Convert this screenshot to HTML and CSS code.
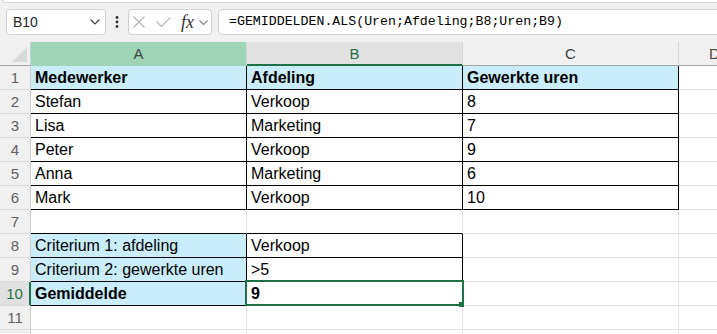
FILE: index.html
```html
<!DOCTYPE html>
<html lang="nl">
	<head>
		<title>Werkblad</title>
		<meta charset="UTF-8" />
		<link rel="stylesheet" href="styles.css">
	</head>
	<body>
		<div class="ribbon-edge"></div>
		<!-- Formula bar -->
		<div class="formula-bar">
			<div class="name-box">
				<span>B10</span>
				<svg class="chev" width="10" height="6" viewBox="0 0 10 6"><path d="M0.5 0.5L5 5L9.5 0.5"/></svg>
			</div>
			<div class="more">
				<svg width="4" height="12" viewBox="0 0 4 12"><circle cx="2" cy="1.5" r="1.4"/><circle cx="2" cy="6" r="1.4"/><circle cx="2" cy="10.5" r="1.4"/></svg>
			</div>
			<div class="fx-box">
				<svg class="cancel" width="12" height="12" viewBox="0 0 12 12"><path d="M0.5 0.5L11.5 11.5M11.5 0.5L0.5 11.5"/></svg>
				<svg class="enter" width="15" height="10" viewBox="0 0 15 10"><path d="M0.5 4.5L5.5 9.5L14.5 0.5"/></svg>
				<span class="fx">fx</span>
				<svg class="chev small" width="9" height="5" viewBox="0 0 9 5"><path d="M0.5 0.5L4.5 4.5L8.5 0.5"/></svg>
			</div>
			<div class="formula">=GEMIDDELDEN.ALS(Uren;Afdeling;B8;Uren;B9)</div>
		</div>

		<!-- Sheet -->
		<div class="sheet">
			<div class="corner"><svg width="15" height="15" viewBox="0 0 15 15"><polygon points="0,15 15,15 15,0"/></svg></div>
			<div class="ch hover">A</div>
			<div class="ch active">B</div>
			<div class="ch">C</div>
			<div class="ch">D</div>

			<div class="rh">1</div>
			<div class="c fill b br bb">Medewerker</div>
			<div class="c fill b br bb">Afdeling</div>
			<div class="c fill b br bb">Gewerkte uren</div>
			<div class="c"></div>

			<div class="rh">2</div>
			<div class="c br bb">Stefan</div>
			<div class="c br bb">Verkoop</div>
			<div class="c br bb">8</div>
			<div class="c"></div>

			<div class="rh">3</div>
			<div class="c br bb">Lisa</div>
			<div class="c br bb">Marketing</div>
			<div class="c br bb">7</div>
			<div class="c"></div>

			<div class="rh">4</div>
			<div class="c br bb">Peter</div>
			<div class="c br bb">Verkoop</div>
			<div class="c br bb">9</div>
			<div class="c"></div>

			<div class="rh">5</div>
			<div class="c br bb">Anna</div>
			<div class="c br bb">Marketing</div>
			<div class="c br bb">6</div>
			<div class="c"></div>

			<div class="rh">6</div>
			<div class="c br bb">Mark</div>
			<div class="c br bb">Verkoop</div>
			<div class="c br bb">10</div>
			<div class="c"></div>

			<div class="rh">7</div>
			<div class="c bb"></div>
			<div class="c bb"></div>
			<div class="c"></div>
			<div class="c"></div>

			<div class="rh">8</div>
			<div class="c fill br bb">Criterium 1: afdeling</div>
			<div class="c br bb">Verkoop</div>
			<div class="c"></div>
			<div class="c"></div>

			<div class="rh">9</div>
			<div class="c fill br bb">Criterium 2: gewerkte uren</div>
			<div class="c br bb">&gt;5</div>
			<div class="c"></div>
			<div class="c"></div>

			<div class="rh active">10</div>
			<div class="c fill b br bb">Gemiddelde</div>
			<div class="c b br bb sel">9<div class="sel-box"><div class="handle"></div></div></div>
			<div class="c"></div>
			<div class="c"></div>

			<div class="rh">11</div>
			<div class="c"></div>
			<div class="c"></div>
			<div class="c"></div>
			<div class="c"></div>

			<!-- row 12 only peeks in at the bottom edge -->
			<div class="rh"></div>
			<div class="c"></div>
			<div class="c"></div>
			<div class="c"></div>
			<div class="c"></div>
		</div>
	</body>
</html>
```

FILE: styles.css
```css
* {
	box-sizing: border-box;
}

html, body {
	overflow: hidden;
}

body {
	margin: 0;
	width: 717px;
	height: 334px;
	background: #f0f0f0;
	font-family: "Liberation Sans", Arial, sans-serif;
}

.ribbon-edge {
	height: 3px;
	margin: 0 -10px 0 2px;
	background: #fff;
	border: 1px solid #d4d4d4;
	border-top: none;
	border-radius: 0 0 0 6px;
}

/* formula bar */
.formula-bar {
	display: flex;
	align-items: flex-start;
	height: 39px;
	padding: 6px 0 0 6px;
}

.name-box {
	width: 100px;
	height: 26px;
	display: flex;
	align-items: center;
	justify-content: space-between;
	padding: 0 5px 0 6px;
	background: #fff;
	border: 1px solid #d1d1d1;
	border-radius: 4px;
	font-size: 14px;
	color: #242424;
}

.chev path {
	fill: none;
	stroke: #424242;
	stroke-width: 1.2;
}

.chev.small path {
	stroke: #8a8a8a;
}

.more {
	width: 22px;
	height: 26px;
	display: flex;
	align-items: center;
	justify-content: center;
}

.more circle {
	fill: #333;
}

.fx-box {
	width: 84px;
	height: 26px;
	display: flex;
	align-items: center;
	padding-left: 4px;
	background: #fff;
	border: 1px solid #d1d1d1;
	border-radius: 4px;
}

.cancel path, .enter path {
	fill: none;
	stroke: #b3b3b3;
	stroke-width: 1.1;
}

.enter {
	margin-left: 11px;
}

.fx {
	margin-left: 10px;
	width: 16px;
	font-family: "Liberation Serif", serif;
	font-style: italic;
	font-size: 18px;
	line-height: 22px;
	color: #333;
}

.fx-box .chev {
	margin-left: 2px;
}

.formula {
	flex: 1;
	height: 26px;
	margin: 0 -10px 0 6px;
	padding-left: 10px;
	background: #fff;
	border: 1px solid #d1d1d1;
	border-radius: 4px;
	font-family: "Liberation Mono", monospace;
	font-size: 13.25px;
	line-height: 24px;
	color: #000;
}

/* sheet grid */
.sheet {
	display: grid;
	grid-template-columns: 31px 216px 216px 216px 72px;
	grid-auto-rows: 24px;
	width: max-content;
	background: #fff;
}

.corner {
	display: flex;
	align-items: flex-end;
	justify-content: flex-end;
	padding: 0 3px 3px 0;
	background: #f0f0f0;
	border-right: 1px solid #cfcfcf;
	border-bottom: 1px solid #a6a6a6;
}

.corner polygon {
	fill: #d9d9d9;
}

.ch {
	display: flex;
	align-items: center;
	justify-content: center;
	background: #f0f0f0;
	border-right: 1px solid #d6d6d6;
	border-bottom: 1px solid #a6a6a6;
	font-size: 15px;
	color: #444;
}

.ch.hover {
	background: #9fd5b7;
	border-bottom-color: #9fd5b7;
}

.ch.active {
	background: #e1e1e1;
	color: #1e7145;
	border-bottom: 2px solid #1e7145;
}

.rh {
	background: #f0f0f0;
	border-right: 1px solid #cfcfcf;
	border-bottom: 1px solid #dadada;
	text-align: center;
	font-size: 15px;
	line-height: 23px;
	color: #616161;
}

.rh.active {
	background: #e1e1e1;
	color: #1e7145;
	border-right: 2px solid #1e7145;
}

.c {
	padding: 0 4px;
	border-right: 1px solid #e1e1e1;
	border-bottom: 1px solid #e1e1e1;
	font-size: 16px;
	line-height: 23px;
	color: #000;
	white-space: nowrap;
	overflow: hidden;
}

.fill {
	background: #caedfb;
}

.b {
	font-weight: bold;
}

.br {
	border-right-color: #000;
}

.bb {
	border-bottom-color: #000;
}

.sel {
	position: relative;
	overflow: visible;
}

.sel-box {
	position: absolute;
	inset: -2px -2px -1px -2px;
	border: 2px solid #1e7145;
}

.handle {
	position: absolute;
	right: -2px;
	bottom: -3px;
	width: 5px;
	height: 5px;
	background: #1e7145;
}
```
